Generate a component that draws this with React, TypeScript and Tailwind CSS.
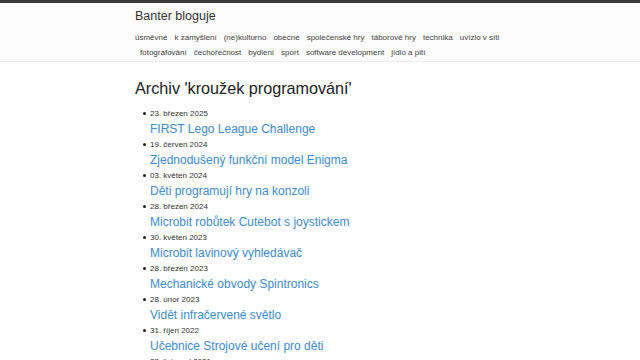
const rowOne = [
  "úsměvné",
  "k zamyšlení",
  "(ne)kulturno",
  "obecné",
  "společenské hry",
  "táborové hry",
  "technika",
  "uvízlo v síti",
];

const rowTwo = [
  "fotografování",
  "čechořečnost",
  "bydlení",
  "sport",
  "software development",
  "jídlo a pití",
];

const posts = [
  { date: "23. březen 2025", title: "FIRST Lego League Challenge" },
  { date: "19. červen 2024", title: "Zjednodušený funkční model Enigma" },
  { date: "03. květen 2024", title: "Děti programují hry na konzoli" },
  { date: "28. březen 2024", title: "Microbit robůtek Cutebot s joystickem" },
  { date: "30. květen 2023", title: "Microbit lavinový vyhledávač" },
  { date: "28. březen 2023", title: "Mechanické obvody Spintronics" },
  { date: "28. únor 2023", title: "Vidět infračervené světlo" },
  { date: "31. říjen 2022", title: "Učebnice Strojové učení pro děti" },
  { date: "23. listopad 2021", title: "Programujeme s micro:bitem" },
];

const App = () => {
  return (
    <div
      className="w-[640px] h-[360px] overflow-hidden bg-white text-[#333]"
      style={{ fontFamily: '"Liberation Sans", Arial, sans-serif' }}
    >
      {/* Header */}
      <header className="border-t-[3px] border-[#3a3a3a] bg-[#fcfcfc] border-b border-b-[#eeeeee]">
        <div className="pl-[135px] pt-[5px] h-[58px]">
          <h1 className="text-[12.5px] leading-[16px] text-[#333]">Banter bloguje</h1>
          <nav className="mt-[6px] text-[8px] leading-[15px] text-[#444]">
            <div className="flex gap-[7px]">
              {rowOne.map((item) => (
                <a key={item}>{item}</a>
              ))}
            </div>
            <div className="flex gap-[7px] pl-[5px]">
              {rowTwo.map((item) => (
                <a key={item}>{item}</a>
              ))}
            </div>
          </nav>
        </div>
      </header>

      {/* Archive */}
      <main className="pl-[135px] pt-[16px]">
        <h2 className="text-[16.2px] leading-[20px] text-[#222]">
          Archiv 'kroužek programování'
        </h2>
        <ul className="mt-[9px] pl-[15px]">
          {posts.map((post) => (
            <li key={post.title} className="text-[8px] leading-[13px]">
              <div className="flex items-center">
                <span className="-ml-[7px] mr-[4px] w-[3px] h-[3px] rounded-full bg-[#222]" />
                <span className="text-[#333]">{post.date}</span>
              </div>
              <a className="block text-[12px] leading-[18px] text-[#428bca]">
                {post.title}
              </a>
            </li>
          ))}
        </ul>
      </main>
    </div>
  );
};

export default App;
